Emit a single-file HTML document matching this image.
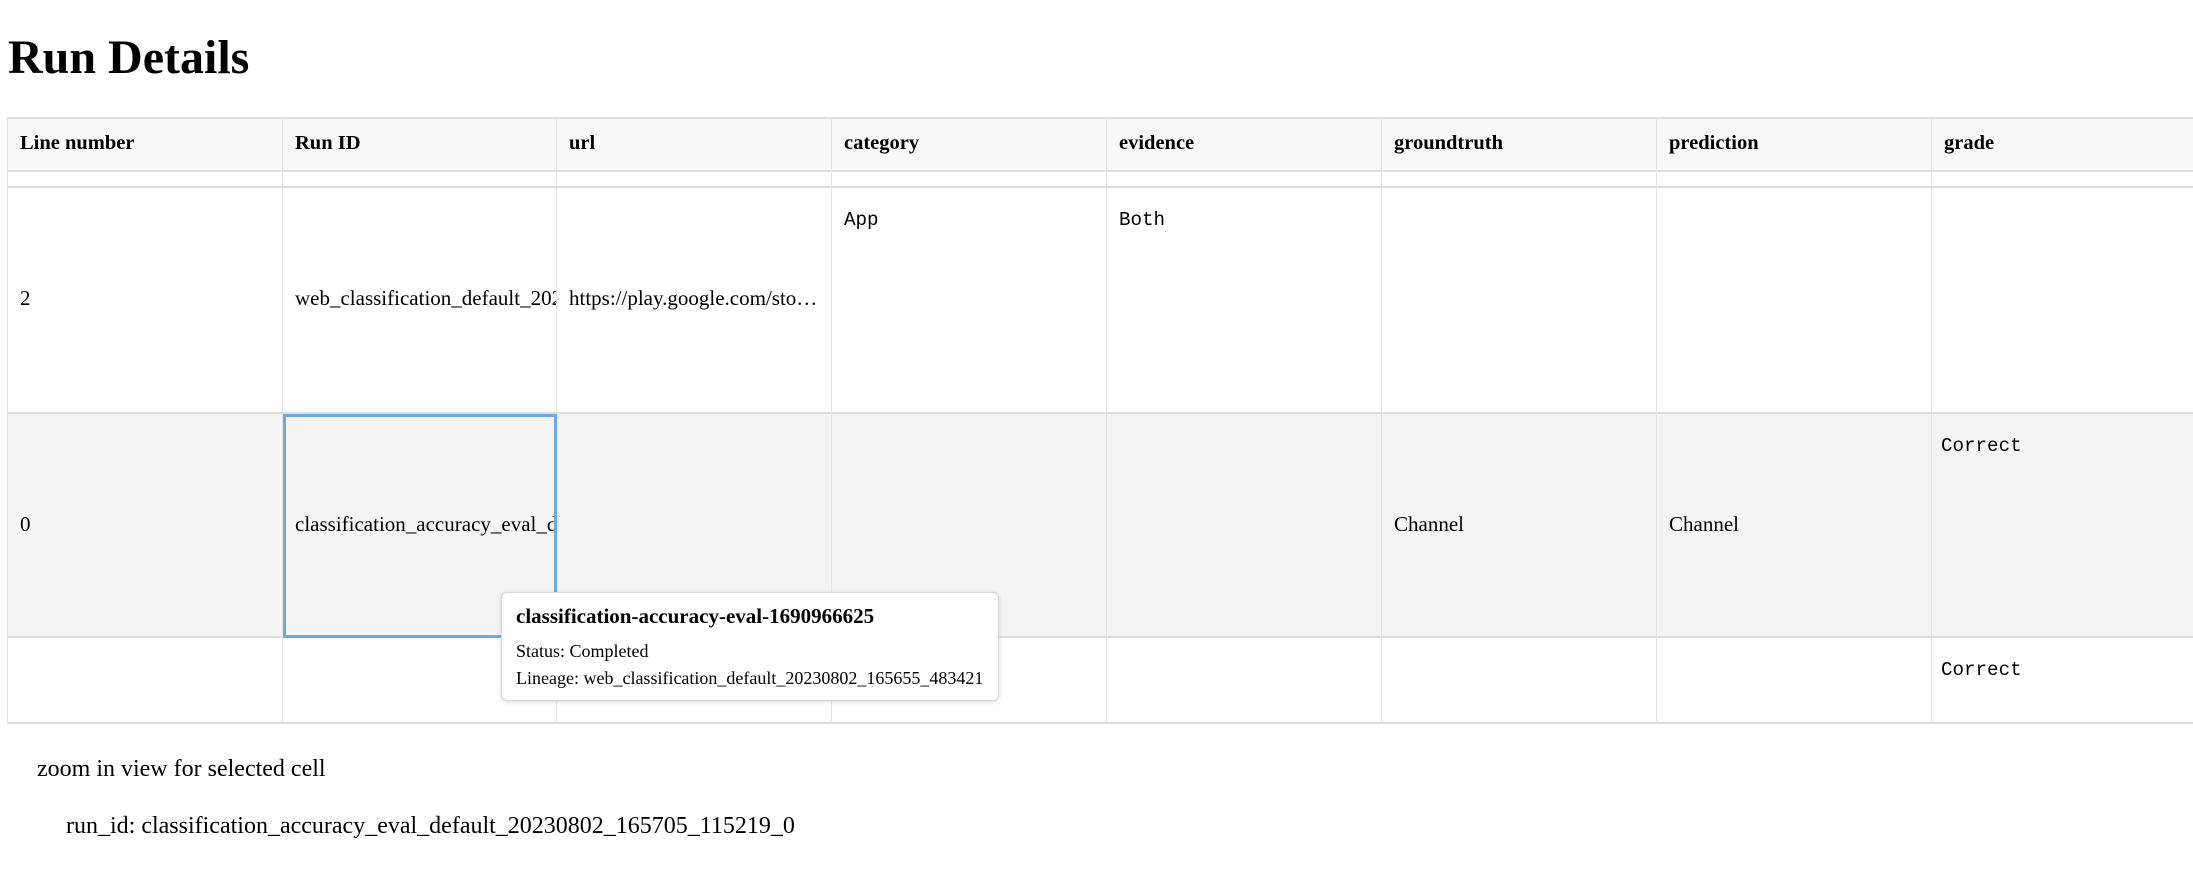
<!DOCTYPE html>
<html><head><meta charset="utf-8"><style>
*{box-sizing:border-box;margin:0;padding:0}
body{width:2193px;height:880px;overflow:hidden;background:#fff;font-family:"Liberation Serif",serif;color:#000;position:relative}
.a{position:absolute}
h1{position:absolute;left:8px;top:28px;font-size:48px;font-weight:bold;line-height:60px}
.row{position:absolute;left:7px;width:2200px;border-bottom:2px solid #ddd}
.vl{position:absolute;width:1px;background:#e3e3e3;top:118px;height:606px}
.t{position:absolute;font-size:21px;white-space:nowrap;overflow:hidden}
.th{font-weight:bold;font-size:20.5px}
.m{font-family:"Liberation Mono","DejaVu Sans Mono",monospace;font-size:19.2px}
</style></head><body>
<h1>Run Details</h1>
<div class="row" style="top:117px;height:55px;background:#f8f8f8;border-top:2px solid #ddd"></div>
<div class="row" style="top:172px;height:16px"></div>
<div class="row" style="top:188px;height:226px"></div>
<div class="row" style="top:414px;height:224px;background:#f4f4f4"></div>
<div class="row" style="top:638px;height:86px"></div>
<div class="vl" style="left:7px"></div>
<div class="vl" style="left:282px"></div>
<div class="vl" style="left:556px"></div>
<div class="vl" style="left:831px"></div>
<div class="vl" style="left:1106px"></div>
<div class="vl" style="left:1381px"></div>
<div class="vl" style="left:1656px"></div>
<div class="vl" style="left:1931px"></div>

<div class="t th" style="left:20px;top:132px">Line number</div>
<div class="t th" style="left:295px;top:132px">Run ID</div>
<div class="t th" style="left:569px;top:132px">url</div>
<div class="t th" style="left:844px;top:132px">category</div>
<div class="t th" style="left:1119px;top:132px">evidence</div>
<div class="t th" style="left:1394px;top:132px">groundtruth</div>
<div class="t th" style="left:1669px;top:132px">prediction</div>
<div class="t th" style="left:1944px;top:132px">grade</div>

<div class="t" style="left:20px;top:286px">2</div>
<div class="t" style="left:295px;top:286px;width:261px">web_classification_default_20230802_165655_483421</div>
<div class="t" style="left:569px;top:286px">https://play.google.com/sto…</div>
<div class="t m" style="left:844px;top:209px">App</div>
<div class="t m" style="left:1119px;top:209px">Both</div>

<div class="a" style="left:283px;top:414px;width:274px;height:224px;border:3px solid #68abe5"></div>
<div class="t" style="left:20px;top:512px">0</div>
<div class="t" style="left:295px;top:512px;width:259px">classification_accuracy_eval_default_20230802_165705_115219_0</div>
<div class="t" style="left:1394px;top:512px">Channel</div>
<div class="t" style="left:1669px;top:512px">Channel</div>
<div class="t m" style="left:1941px;top:435px">Correct</div>
<div class="t m" style="left:1941px;top:659px">Correct</div>

<div class="a" style="left:501px;top:592px;width:498px;height:109px;background:#fff;border:1px solid #d8d8d8;border-radius:6px;box-shadow:0 1px 4px rgba(0,0,0,0.15)"></div>
<div class="t" style="left:516px;top:604px;font-weight:bold;font-size:21px">classification-accuracy-eval-1690966625</div>
<div class="t" style="left:516px;top:641px;font-size:18px">Status: Completed</div>
<div class="t" style="left:516px;top:668px;font-size:18px">Lineage: web_classification_default_20230802_165655_483421</div>

<div class="t" style="left:37px;top:756px;font-size:24px">zoom in view for selected cell</div>
<div class="t" style="left:66px;top:813px;font-size:24px">run_id: classification_accuracy_eval_default_20230802_165705_115219_0</div>
</body></html>
